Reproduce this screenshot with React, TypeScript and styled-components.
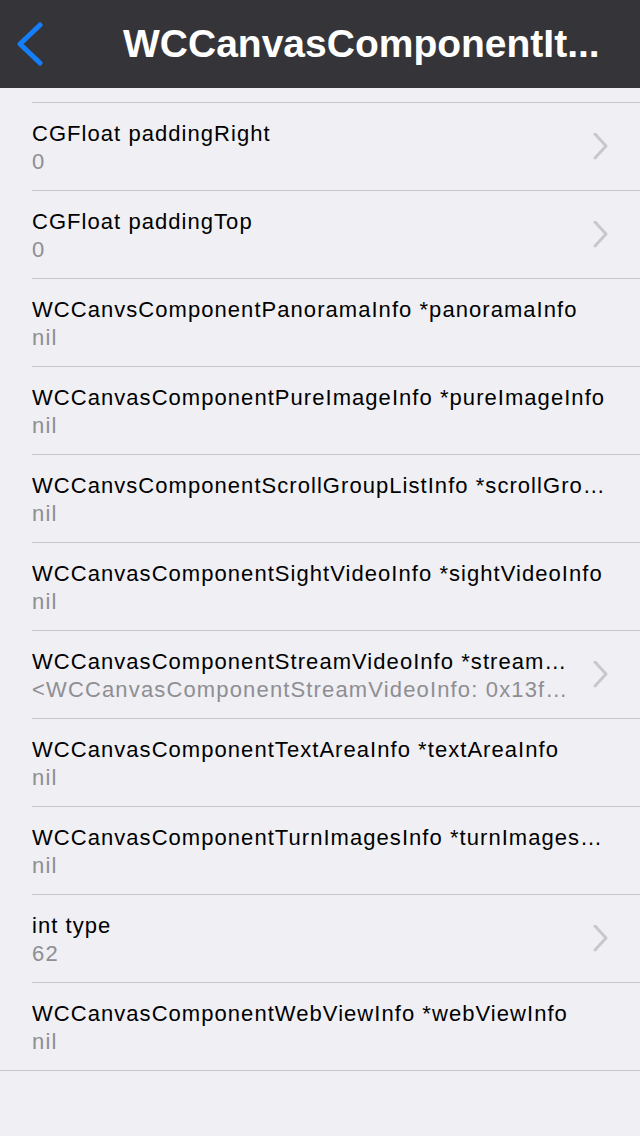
import React from 'react'
import styled, { createGlobalStyle } from 'styled-components'

const GlobalStyle = createGlobalStyle`
  html, body {
    margin: 0;
    padding: 0;
    background: #efeff4;
  }
  body {
    font-family: "Liberation Sans", Arial, sans-serif;
  }
`

const Page = styled.div`
  width: 640px;
  height: 1136px;
  background: #efeff4;
  overflow: hidden;
`

const NavBar = styled.div`
  height: 88px;
  background: #353539;
  display: flex;
  align-items: center;
`

const BackButton = styled.div`
  width: 60px;
  height: 88px;
  display: flex;
  align-items: center;
  padding-left: 14px;
  box-sizing: border-box;
`

const NavTitle = styled.h1`
  margin: 0 0 0 63px;
  color: #ffffff;
  font-size: 39px;
  font-weight: 700;
  white-space: nowrap;
`

const List = styled.div`
  padding-top: 14px;
  border-bottom: 1px solid #c8c7cc;
`

const Row = styled.div`
  padding-left: 32px;
`

const RowInner = styled.div`
  height: 88px;
  box-sizing: border-box;
  border-top: 1px solid #c8c7cc;
  display: flex;
  align-items: center;
  padding-right: 30px;
`

const Texts = styled.div<{ $chevron: boolean }>`
  flex: 1;
  min-width: 0;
  padding-top: 3px;
  padding-right: ${p => (p.$chevron ? '20px' : '0')};
`

const Title = styled.div`
  font-size: 22px;
  line-height: 28px;
  letter-spacing: 1.05px;
  color: #000000;
  white-space: nowrap;
  overflow: hidden;
`

const Value = styled.div`
  font-size: 22px;
  line-height: 28px;
  letter-spacing: 1.15px;
  color: #8e8e93;
  white-space: nowrap;
  overflow: hidden;
`

const Chevron = () => (
  <svg width="18" height="28" viewBox="0 0 18 28">
    <path d="M3 1 L14 13 L3 25" fill="none" stroke="#c7c7cc" strokeWidth="3" strokeLinecap="round" strokeLinejoin="round" />
  </svg>
)

const BackArrow = () => (
  <svg width="32" height="44" viewBox="0 0 32 44">
    <path d="M26 3 L6 22 L26 41" fill="none" stroke="#157efb" strokeWidth="5" strokeLinecap="round" strokeLinejoin="round" />
  </svg>
)

type Item = { title: string; value: string; chevron: boolean }

const items: Item[] = [
  { title: 'CGFloat paddingRight', value: '0', chevron: true },
  { title: 'CGFloat paddingTop', value: '0', chevron: true },
  { title: 'WCCanvsComponentPanoramaInfo *panoramaInfo', value: 'nil', chevron: false },
  { title: 'WCCanvasComponentPureImageInfo *pureImageInfo', value: 'nil', chevron: false },
  { title: 'WCCanvsComponentScrollGroupListInfo *scrollGro…', value: 'nil', chevron: false },
  { title: 'WCCanvasComponentSightVideoInfo *sightVideoInfo', value: 'nil', chevron: false },
  { title: 'WCCanvasComponentStreamVideoInfo *stream…', value: '<WCCanvasComponentStreamVideoInfo: 0x13f…', chevron: true },
  { title: 'WCCanvasComponentTextAreaInfo *textAreaInfo', value: 'nil', chevron: false },
  { title: 'WCCanvasComponentTurnImagesInfo *turnImages…', value: 'nil', chevron: false },
  { title: 'int type', value: '62', chevron: true },
  { title: 'WCCanvasComponentWebViewInfo *webViewInfo', value: 'nil', chevron: false },
]

const App: React.FC = () => {
  return (
    <Page>
      <GlobalStyle />
      <NavBar>
        <BackButton>
          <BackArrow />
        </BackButton>
        <NavTitle>WCCanvasComponentIt...</NavTitle>
      </NavBar>
      <List>
        {items.map(item => (
          <Row key={item.title}>
            <RowInner>
              <Texts $chevron={item.chevron}>
                <Title>{item.title}</Title>
                <Value>{item.value}</Value>
              </Texts>
              {item.chevron && <Chevron />}
            </RowInner>
          </Row>
        ))}
      </List>
    </Page>
  )
}

export default App
